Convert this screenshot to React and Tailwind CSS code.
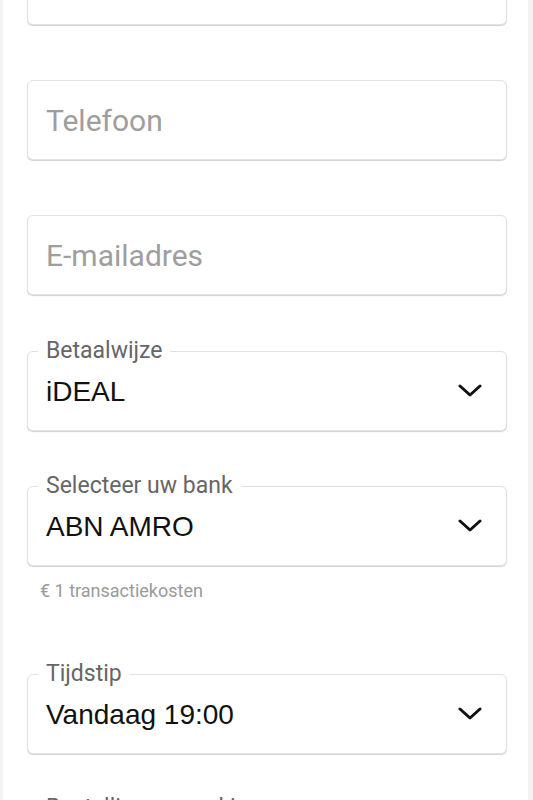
import React from "react";

function Chevron() {
  return (
    <svg width="24" height="14" viewBox="0 0 24 14" fill="none" className="shrink-0">
      <path d="M2 2 L12 11 L22 2" stroke="#111" strokeWidth="3" strokeLinecap="round" strokeLinejoin="round" />
    </svg>
  );
}

function InputBox({ placeholder, className = "" }) {
  return (
    <div className={"h-[80px] rounded-[6px] border border-[#e2e2e2] shadow-[0_1px_1px_rgba(0,0,0,0.18)] bg-white flex items-center px-[18px] " + className}>
      <span className="text-[30px] text-[#9e9e9e] font-['Roboto',sans-serif]">{placeholder}</span>
    </div>
  );
}

function SelectBox({ label, value, className = "" }) {
  return (
    <div className={"relative h-[80px] rounded-[6px] border border-[#e2e2e2] shadow-[0_1px_1px_rgba(0,0,0,0.18)] bg-white flex items-center justify-between pl-[18px] pr-[24px] " + className}>
      <span className="absolute left-[10px] top-[-15px] bg-white px-[8px] text-[23px] leading-[28px] text-[#666] font-['Roboto',sans-serif]">
        {label}
      </span>
      <span className="text-[28px] text-[#111] font-['Liberation_Sans',Arial,sans-serif] pt-[2px]">{value}</span>
      <Chevron />
    </div>
  );
}

export default function App() {
  return (
    <div className="w-[533px] h-[800px] overflow-hidden bg-[#f3f3f3] flex">
      <div className="ml-[3px] w-[525px] bg-white pl-[24px] pr-[21px]">
        <div className="-mt-[55px]">
          <InputBox placeholder="" className="mb-[55px]" />
          <InputBox placeholder="Telefoon" className="mb-[55px]" />
          <InputBox placeholder="E-mailadres" className="mb-[56px]" />
          <SelectBox label="Betaalwijze" value="iDEAL" className="mb-[55px]" />
          <SelectBox label="Selecteer uw bank" value="ABN AMRO" />
          <div className="mt-[14px] pl-[13px] text-[18px] leading-[22px] text-[#9a9a9a] font-['Roboto',sans-serif]">
            € 1 transactiekosten
          </div>
          <SelectBox label="Tijdstip" value="Vandaag 19:00" className="mt-[72px] mb-[54px]" />
          <SelectBox label="Bestelling opmerkingen" value="" />
        </div>
      </div>
    </div>
  );
}
